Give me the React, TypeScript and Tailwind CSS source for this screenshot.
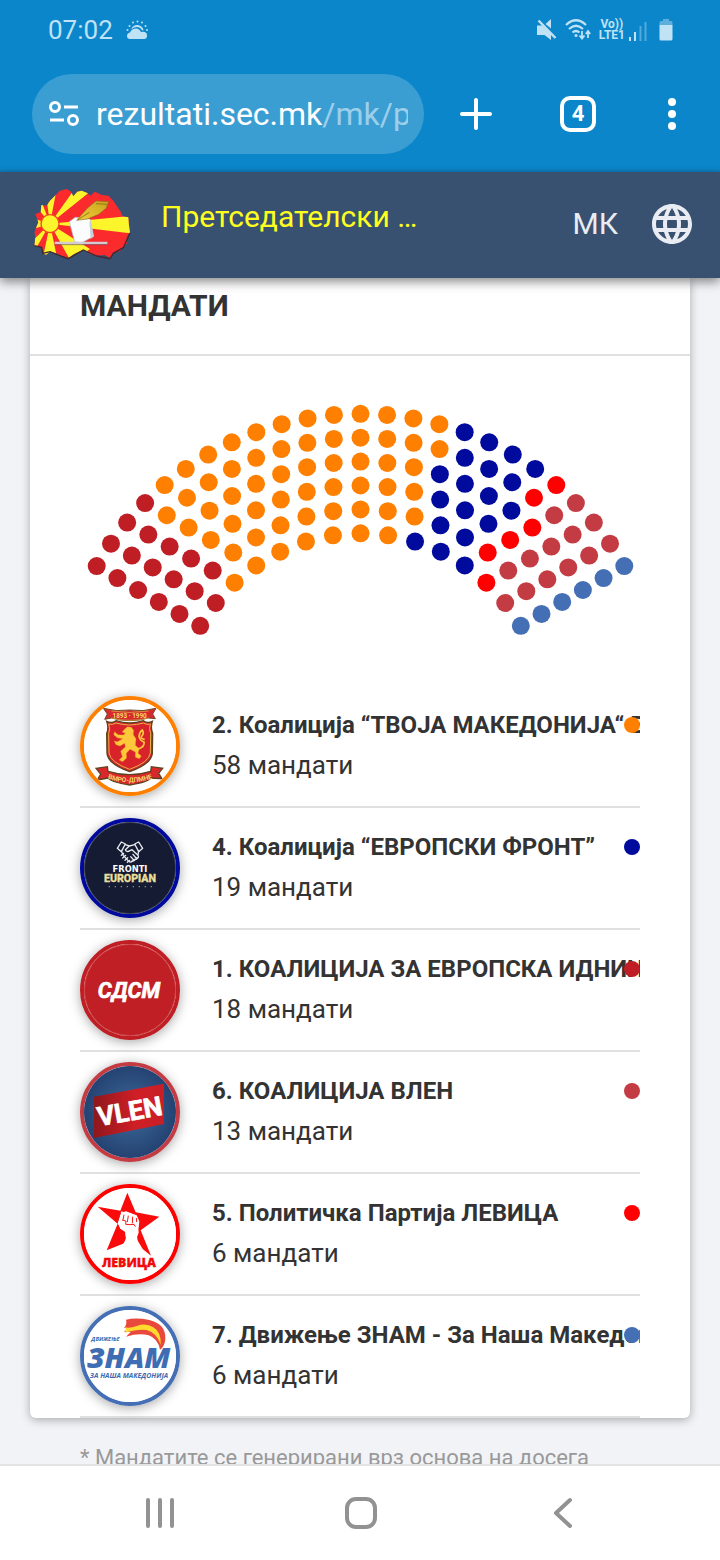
import React from 'react';
import { MdLanguage } from 'react-icons/md';

interface Party {
  id: string;
  name: string;
  seats: number;
  color: string;
  logo: React.ReactNode;
}

const VmroLogo = () => (
  <svg viewBox="12 12 276 276" className="h-full w-full" role="img" aria-label="ВМРО-ДПМНЕ">
    <rect width="300" height="300" fill="#fff" />
    <path d="M70 37 Q110 48 149 42 Q190 48 228 37 L218 54 L226 68 L206 66 Q149 82 94 66 L74 70 L82 54 Z" fill="#d62a2e" stroke="#6b4a22" strokeWidth="3" />
    <path d="M94 45 Q149 54 206 45 M94 66 Q149 80 206 66" fill="none" stroke="#e8b84a" strokeWidth="2" />
    <text x="149" y="66" fontSize="19" fontWeight="700" fill="#f6d765" textAnchor="middle" fontFamily="Roboto, sans-serif">1893 · 1990</text>
    <path d="M80 76 Q95 84 108 74 Q149 88 190 74 Q203 84 217 76 Q211 96 218 112 L217 172 Q214 204 149 227 Q84 204 81 172 L80 112 Q87 96 80 76 Z" fill="#d8232a" stroke="#5d4320" strokeWidth="4" />
    <path d="M86 84 Q97 88 108 81 Q149 93 190 81 Q201 88 211 84 Q206 98 212 113 L211 171 Q207 199 149 220 Q91 199 87 171 L86 113 Q92 98 86 84 Z" fill="none" stroke="#e6b44a" strokeWidth="3" />
    <path d="M132 101 L142 92 L154 94 L161 103 L160 116 L168 128 L166 148 L178 158 L174 172 L184 180 L178 188 L166 184 L166 168 L150 160 L139 172 L140 186 L128 197 L117 192 L127 182 L122 166 L136 152 L134 142 L120 150 L108 146 L102 135 L112 137 L128 128 L113 126 L101 116 L104 107 L114 116 L130 117 L136 112 L126 108 Z" fill="#ffc83a" stroke="#f08a24" strokeWidth="1" />
    <path d="M172 160 Q196 152 192 138 Q180 134 177 122 Q178 108 187 102 Q194 112 184 122 Q182 128 194 130" fill="none" stroke="#ffc83a" strokeWidth="5" />
    <path d="M48 217 L82 212 L84 226 Q149 246 212 226 L214 212 L248 217 L236 232 L246 248 L212 246 Q206 258 149 267 Q92 258 84 246 L52 252 L62 234 Z" fill="#d8282c" stroke="#5d4320" strokeWidth="4" />
    <path id="vmroCurve" d="M78 246 Q149 272 222 246" fill="none" />
    <text fontSize="20" fontWeight="700" fill="#f6d765" textAnchor="middle" fontFamily="Roboto, sans-serif">
      <textPath href="#vmroCurve" startOffset="50%">ВМРО-ДПМНЕ</textPath>
    </text>
  </svg>
);

const FrontLogo = () => (
  <svg viewBox="12 12 276 276" className="h-full w-full" role="img" aria-label="Fronti Europian">
    <rect width="300" height="300" fill="#141b32" />
    <circle cx="150" cy="150" r="137" fill="none" stroke="#5b6076" strokeWidth="2" />
    <g fill="none" stroke="#e9ebf0" strokeWidth="4" strokeLinejoin="round" strokeLinecap="round" transform="translate(0 -4)">
      <path d="M112 95 L124 76 L136 82 L124 105 Z M164 82 L176 76 L188 95 L176 105 Z" />
      <path d="M136 84 L148 88 L164 84 M124 103 L130 116 L146 134 Q152 139 157 133 M148 88 L136 99 Q140 108 150 102 L156 99 L174 116 Q178 122 171 126" />
      <path d="M157 133 Q164 134 164 128 Q171 130 171 123 M152 120 L161 130 M159 113 L168 124 M176 103 L174 114" />
      <path d="M124 116 L131 110 M128 124 L137 116 M135 131 L143 123 M142 137 L149 131" />
    </g>
    <text x="150" y="163" fontSize="25" fontWeight="700" fill="#fff" textAnchor="middle" fontFamily="DejaVu Sans, sans-serif">FRONTI</text>
    <text x="150" y="193" fontSize="32" fontWeight="800" fill="#eadf9c" stroke="#eadf9c" strokeWidth="1" textAnchor="middle" fontFamily="Roboto, sans-serif">EUROPIAN</text>
    <path d="M86 206 H216" stroke="#8f8b72" strokeWidth="4" strokeDasharray="4 14" />
  </svg>
);

const SdsmLogo = () => (
  <svg viewBox="12 12 276 276" className="h-full w-full" role="img" aria-label="СДСМ">
    <rect width="300" height="300" fill="#c01f25" />
    <circle cx="150" cy="150" r="137" fill="none" stroke="#d9605f" strokeWidth="2" />
    <text x="147" y="175" fontSize="66" fontWeight="700" fontStyle="italic" fill="#fff" stroke="#fff" strokeWidth="2" textAnchor="middle" fontFamily="Roboto, sans-serif">СДСМ</text>
  </svg>
);

const VlenLogo = () => (
  <svg viewBox="12 12 276 276" className="h-full w-full" role="img" aria-label="VLEN">
    <defs>
      <radialGradient id="vlenBg">
        <stop offset="0" stopColor="#3d6a9c" />
        <stop offset="1" stopColor="#223f6e" />
      </radialGradient>
      <linearGradient id="vlenRed">
        <stop offset="0" stopColor="#8f171c" />
        <stop offset="0.6" stopColor="#d01f26" />
        <stop offset="1" stopColor="#c81e26" />
      </linearGradient>
    </defs>
    <rect width="300" height="300" fill="url(#vlenBg)" />
    <path d="M42 104 L252 65 V186 L42 228 Z" fill="url(#vlenRed)" />
    <text x="149" y="176" fontSize="80" fontWeight="700" fill="#fff" stroke="#fff" strokeWidth="2" textAnchor="middle" transform="rotate(-10 149 148)" fontFamily="Roboto, sans-serif">VLEN</text>
  </svg>
);

const LevicaLogo = () => (
  <svg viewBox="12 12 276 276" className="h-full w-full" role="img" aria-label="Левица">
    <rect width="300" height="300" fill="#fff" />
    <path d="M142 26 L167 85 L238 98 L182 139 L213 215 L174 184 L171 160 L176 146 L174 115 L168 95 L124 82 L113 118 L122 134 L135 142 L138 162 L133 178 L80 199 L113 119 L53 68 L121 80 Z" fill="#fa0a0a" />
    <path d="M124 86 L138 82 L170 94 L178 112 L176 130 L170 144 L172 168 L188 195 L126 186 L138 166 L136 144 L121 134 L114 116 Z" fill="#fff" />
    <path d="M122 84 L112 116 M132 92 L129 108 M145 95 L142 114 M158 98 L157 118 M126 108 L138 111 L137 121 L150 122 L162 121 L166 128 M169 102 L170 114" fill="none" stroke="#fa1515" strokeWidth="3" />
    <text x="147" y="249" fontSize="37" fontWeight="800" fill="#f00a0a" stroke="#f00a0a" strokeWidth="1" textAnchor="middle" fontFamily="Open Sans, sans-serif">ЛЕВИЦА</text>
  </svg>
);

const ZnamLogo = () => (
  <svg viewBox="12 12 276 276" className="h-full w-full" role="img" aria-label="ЗНАМ">
    <rect width="300" height="300" fill="#fff" />
    <text x="34" y="106" fontSize="17" fontWeight="700" fontStyle="italic" fill="#3b68ad" fontFamily="Open Sans, sans-serif">ДВИЖЕЊЕ</text>
    <text x="146" y="187" fontSize="86" fontWeight="800" fontStyle="italic" fill="#3f6db3" textAnchor="middle" fontFamily="Open Sans, sans-serif">ЗНАМ</text>
    <text x="147" y="215" fontSize="21" fontWeight="700" fontStyle="italic" fill="#3f6db3" textAnchor="middle" fontFamily="Open Sans, sans-serif">ЗА НАША МАКЕДОНИЈА</text>
    <path d="M138 41 Q168 34 208 42 Q258 54 256 98 Q255 120 240 131 Q234 98 206 88 Q178 80 138 92 Q146 84 152 78 L132 78 Q140 70 146 66 L132 66 Q142 56 138 41 Z" fill="#e9483c" />
    <path d="M134 64 Q150 68 170 60 Q198 50 220 64 Q244 78 242 116 Q230 80 200 72 Q176 68 134 80 Q142 72 134 64 Z" fill="#ffd92e" />
  </svg>
);

// Order of the list, largest group first
const parties: Party[] = [
  { id: 'vmro', name: '2. Коалиција “ТВОЈА МАКЕДОНИЈА“ ВМРО-ДПМНЕ', seats: 58, color: '#ff8000', logo: <VmroLogo /> },
  { id: 'front', name: '4. Коалиција “ЕВРОПСКИ ФРОНТ”', seats: 19, color: '#000a9c', logo: <FrontLogo /> },
  { id: 'sdsm', name: '1. КОАЛИЦИЈА ЗА ЕВРОПСКА ИДНИНА', seats: 18, color: '#be1e24', logo: <SdsmLogo /> },
  { id: 'vlen', name: '6. КОАЛИЦИЈА ВЛЕН', seats: 13, color: '#c43c43', logo: <VlenLogo /> },
  { id: 'levica', name: '5. Политичка Партија ЛЕВИЦА', seats: 6, color: '#ff0000', logo: <LevicaLogo /> },
  { id: 'znam', name: '7. Движење ЗНАМ - За Наша Македонија', seats: 6, color: '#446fb4', logo: <ZnamLogo /> },
];

// Seating from left to right in the chamber
const seating = ['sdsm', 'vmro', 'front', 'levica', 'vlen', 'znam'];
const rowSizes = [25, 23, 21, 19, 17, 15];

const buildSeats = () => {
  const seats = rowSizes.flatMap((size, row) =>
    Array.from({ length: size }, (_, i) => {
      const fraction = i / (size - 1);
      const angle = ((150 - fraction * 120) * Math.PI) / 180;
      const radius = 304.6 - row * 23.9;
      return { fraction, x: 280.5 + radius * Math.cos(angle), y: 328.4 - radius * Math.sin(angle) };
    })
  );
  seats.sort((a, b) => a.fraction - b.fraction);
  const colors = seating.flatMap((id) => {
    const party = parties.find((p) => p.id === id)!;
    return Array<string>(party.seats).fill(party.color);
  });
  return seats.map((s, i) => ({ ...s, color: colors[i] }));
};

const SeatChart: React.FC = () => (
  <svg viewBox="0 0 560 260" className="block w-full" role="img" aria-label="Мандати">
    {buildSeats().map((s, i) => (
      <circle key={i} cx={s.x} cy={s.y} r="9" fill={s.color} />
    ))}
  </svg>
);

const StatusBar: React.FC = () => (
  <div className="flex h-15 items-center justify-between pl-12 pr-[47px] text-[#bfe2f5]">
    <div className="flex items-center gap-3">
      <span className="text-[26px] leading-8">07:02</span>
      <svg width="24" height="20" viewBox="0 0 24 20" fill="currentColor">
        <path d="M5 19 Q2 19 2 16 Q2 13 5 12.500 Q7 8 12 8.500 Q15 9 16 12 Q22 11 22 15.500 Q22 19 19 19 Z" />
        <path d="M6 9.500 Q8 4.500 13 5 Q18 6 18.500 10.500 L17 10.300 Q15 6.800 11.500 7 Q8.500 7.200 6 9.500 Z" />
        <g>
          <circle cx="12.500" cy="1.500" r="1" /><circle cx="8" cy="2.500" r="1" /><circle cx="17" cy="2.500" r="1" />
          <circle cx="20.500" cy="6" r="1" /><circle cx="4.500" cy="6" r="1" /><circle cx="2.500" cy="10" r="1" /><circle cx="22" cy="10" r="1" />
        </g>
      </svg>
    </div>
    <div className="flex items-center gap-2">
      <svg width="20" height="22" viewBox="0 0 20 22">
        <path d="M0 6.500 H5 L14 15 V21 L7.500 16 H0 Z M8.500 5 L14 0 V9.500 Z" fill="currentColor" />
        <path d="M1.500 1.500 L18.500 19" stroke="currentColor" strokeWidth="2.500" />
      </svg>
      <svg width="26" height="22" viewBox="0 0 26 22" fill="none" stroke="currentColor" strokeWidth="2.200">
        <path d="M1 6 Q11 -3.500 21 6 M4 10 Q11 3.500 18 10 M7.500 13.500 Q11 10.500 14.500 13.500" />
        <circle cx="11" cy="16.500" r="1.500" fill="currentColor" stroke="none" />
        <path d="M17 12 V19 M14.500 16.500 L17 19.500 L19.500 16.500 M23 19 V12 M20.800 15 L23 12 L25.200 15" strokeWidth="1.800" />
      </svg>
      <div className="flex items-end gap-1">
        <div className="flex flex-col items-center text-[12px] font-bold leading-[11px]">
          <span>Vo))</span>
          <span>LTE1</span>
        </div>
        <svg width="18" height="20" viewBox="0 0 18 20" fill="currentColor">
          <path d="M0 16 H2 V20 H0 Z M5 11 H7 V20 H5 Z" />
          <path d="M10.500 5 H12.500 V20 H10.500 Z M15.500 1 H17.500 V20 H15.500 Z" opacity="0.4" />
        </svg>
      </div>
      <svg width="14" height="22" viewBox="1 0 14 22" fill="currentColor" className="ml-1">
        <path d="M5 0 H11 V2 H13 Q14.500 2 14.500 3.500 V6 H1.500 V3.500 Q1.500 2 3 2 H5 Z" opacity="0.45" />
        <path d="M1.500 6 H14.500 V20 Q14.500 21.500 13 21.500 H3 Q1.500 21.500 1.500 20 Z" />
      </svg>
    </div>
  </div>
);

const BrowserBar: React.FC = () => (
  <div className="flex items-center border-b-2 border-[#0c7bb9] pb-4 pl-8 pr-10 pt-[14px] text-white">
    <div className="flex h-20 w-[392px] items-center gap-4 rounded-full bg-[#3b9ed3] px-4">
      <button type="button" aria-label="Информации за страницата">
        <svg width="32" height="28" viewBox="0 0 32 28" fill="none" stroke="currentColor" strokeWidth="3">
          <circle cx="7" cy="7" r="4.500" />
          <path d="M16 7 H30 M2 20 H16" />
          <circle cx="25" cy="20" r="4.500" />
        </svg>
      </button>
      <div className="min-w-0 flex-1 overflow-hidden whitespace-nowrap text-[32px] leading-10">
        rezultati.sec.mk<span className="text-[#9dceea]">/mk/parliament</span>
      </div>
    </div>
    <div className="flex flex-1 items-center justify-between pl-9">
      <button type="button" aria-label="Нов таб">
        <svg width="32" height="32" viewBox="0 0 32 32" stroke="currentColor" strokeWidth="4" strokeLinecap="round">
          <path d="M16 2 V30 M2 16 H30" />
        </svg>
      </button>
      <button type="button" aria-label="Табови" className="flex h-9 w-9 items-center justify-center rounded-[10px] border-4 border-white text-[22px] font-bold leading-6">
        4
      </button>
      <button type="button" aria-label="Мени">
        <svg width="16" height="32" viewBox="0 0 16 32" fill="currentColor">
          <circle cx="8" cy="4" r="4" /><circle cx="8" cy="16" r="4" /><circle cx="8" cy="28" r="4" />
        </svg>
      </button>
    </div>
  </div>
);

const SiteLogo = () => (
  <svg width="98" height="72" viewBox="99 567 294 216" role="img" aria-label="ДИК">
    <defs>
      <clipPath id="mapShape">
        <path d="M165 590 L180 575 L200 570 L213 578 L220 592 L232 578 L245 575 L262 582 L270 590 L285 578 L305 588 L325 590 L340 605 L350 620 L362 638 L368 652 L385 655 L387 680 L390 700 L380 715 L382 732 L370 745 L360 757 L340 762 L330 778 L315 768 L290 770 L270 765 L250 752 L222 765 L205 778 L185 770 L165 762 L150 758 L138 767 L128 763 L125 745 L103 740 L106 715 L103 700 L115 670 L106 645 L122 640 L124 618 L140 620 L150 605 Z" />
      </clipPath>
      <linearGradient id="nib" x1="0" y1="1" x2="1" y2="0">
        <stop offset="0" stopColor="#f0cc3a" />
        <stop offset="1" stopColor="#c9a41c" />
      </linearGradient>
    </defs>
    <g clipPath="url(#mapShape)">
      <rect x="99" y="567" width="294" height="216" fill="#fb2a2d" />
      <g fill="#fdf52c">
        <path d="M150 674 L134 560 H172 Z M150 674 L226 567 H284 Z M150 674 L400 650 V704 Z M150 674 L214 790 L270 750 Z M150 674 L126 790 H174 Z M150 674 L99 764 V724 Z M150 674 L99 690 V658 Z M150 674 L99 610 L118 590 Z" />
      </g>
    </g>
    <path d="M103 740 L125 745 L128 763 L150 758 L185 772 L205 779 L250 753 L290 771 L330 779 L340 763 L370 746 L390 702" fill="none" stroke="#3b2b33" strokeWidth="4" />
    <circle cx="150" cy="674" r="27" fill="#fdf52c" stroke="#f0471f" strokeWidth="4" />
    <path d="M208 668 L226 655 L270 660 L281 712 L244 732 L224 728 Z" fill="#fbfcfd" stroke="#b2bcc6" strokeWidth="2" />
    <path d="M268 668 L272 668 L281 712 L272 720 Z" fill="#c9d1d8" />
    <path d="M230 664 L262 628 L288 606 L326 608 L318 628 L296 646 L262 660 Z" fill="url(#nib)" stroke="#8d7420" strokeWidth="2" />
    <path d="M234 662 L268 640 M288 614 L322 616" fill="none" stroke="#6f5a16" strokeWidth="2" />
    <path d="M164 732 H322" stroke="#d4cad1" strokeWidth="7" />
    <path d="M164 737 H322" stroke="#6c5563" strokeWidth="2" />
  </svg>
);

const SiteHeader: React.FC = () => (
  <header className="relative z-10 flex h-[106px] shrink-0 items-center bg-[#395170] pb-[2px] pl-[33px] pr-6 shadow-[0_4px_10px_rgba(0,0,0,0.45)]">
    <a href="#" className="shrink-0"><SiteLogo /></a>
    <a href="#" className="ml-[30px] flex-1 pb-[14px] text-[30px] leading-9 text-[#ffff1f]">Претседателски …</a>
    <button type="button" className="flex items-center gap-[30px] text-[30px] leading-9 text-[#e9edf3]">
      МК
      <MdLanguage size={48} />
    </button>
  </header>
);

const PartyRow: React.FC<{ party: Party }> = ({ party }) => (
  <li className="flex gap-8 border-b-2 border-[#e0e0e0] py-[10px]">
    <div
      className="h-25 w-25 shrink-0 overflow-hidden rounded-full border-4 shadow-[0_2px_12px_rgba(0,0,0,0.35)]"
      style={{ borderColor: party.color }}
    >
      {party.logo}
    </div>
    <div className="relative min-w-0 flex-1 pt-[9px] text-[#333333]">
      <h3 className="overflow-hidden whitespace-nowrap text-[24px] font-bold leading-10">{party.name}</h3>
      <p className="text-[26px] leading-10">{party.seats} мандати</p>
      <span className="absolute right-0 top-[21px] h-4 w-4 rounded-full" style={{ backgroundColor: party.color }} />
    </div>
  </li>
);

const NavBar: React.FC = () => (
  <nav className="flex h-24 shrink-0 items-center justify-around border-t-2 border-[#e2e4e4] bg-white px-[60px] text-[#929292]">
    <button type="button" aria-label="Последни">
      <svg width="32" height="32" viewBox="0 0 32 32" stroke="currentColor" strokeWidth="4" strokeLinecap="round">
        <path d="M4 3 V29 M16 3 V29 M28 3 V29" />
      </svg>
    </button>
    <button type="button" aria-label="Почетна">
      <svg width="34" height="34" viewBox="0 0 34 34" fill="none" stroke="currentColor" strokeWidth="4">
        <rect x="4" y="3" width="28" height="28" rx="9" />
      </svg>
    </button>
    <button type="button" aria-label="Назад">
      <svg width="32" height="32" viewBox="0 0 32 32" fill="none" stroke="currentColor" strokeWidth="4" strokeLinecap="round" strokeLinejoin="round">
        <path d="M26 3 L12 16 L26 29" />
      </svg>
    </button>
  </nav>
);

const App: React.FC = () => {
  return (
    <div className="flex h-screen flex-col overflow-hidden bg-[#f1f3f6] font-[Roboto,sans-serif]">
      <div className="shrink-0 bg-[#0b86ca]">
        <StatusBar />
        <BrowserBar />
      </div>
      <SiteHeader />
      <main className="min-h-0 flex-1 overflow-hidden px-[30px]">
        <section className="rounded-b-md bg-white shadow-[0_2px_10px_rgba(0,0,0,0.3)]">
          <h2 className="border-b-2 border-[#e0e0e0] px-[50px] pb-7 pt-2 text-[30px] font-bold leading-10 text-[#333333]">МАНДАТИ</h2>
          <div className="px-[50px] pt-[34px]">
            <SeatChart />
            <ul className="pt-9">
              {parties.map((party) => (
                <PartyRow key={party.id} party={party} />
              ))}
            </ul>
          </div>
        </section>
        <p className="px-[50px] pt-6 text-[22px] leading-8 text-[#999999]">* Мандатите се генерирани врз основа на досега обработените гласови</p>
      </main>
      <NavBar />
    </div>
  );
};

export default App;
